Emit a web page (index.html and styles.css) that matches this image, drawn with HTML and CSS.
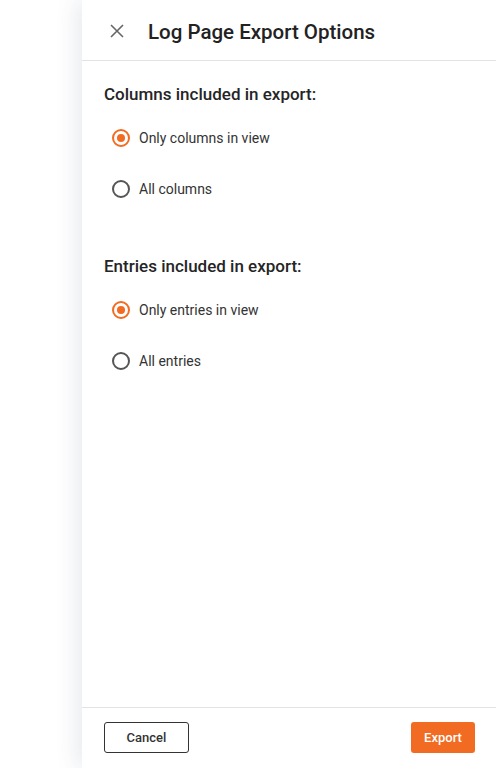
FILE: index.html
```html
<!DOCTYPE html>
<html lang="en">
<head>
    <meta charset="UTF-8">
    <meta name="viewport" content="width=device-width, initial-scale=1.0">
    <title>Log Page Export Options</title>
    <link rel="stylesheet" href="styles.css">
</head>
<body>
    <div class="backdrop"></div>
    <div class="panel">
        <div class="panel-header">
            <button class="close-btn" aria-label="Close">
                <svg width="14" height="14" viewBox="0 0 14 14">
                    <path d="M1 1 L13 13 M13 1 L1 13" stroke="#666" stroke-width="1.6" fill="none"/>
                </svg>
            </button>
            <h1>Log Page Export Options</h1>
        </div>

        <div class="panel-body">
            <div class="section">
                <h2>Columns included in export:</h2>
                <label class="radio-row">
                    <input type="radio" name="columns" checked>
                    <span class="radio"></span>
                    Only columns in view
                </label>
                <label class="radio-row">
                    <input type="radio" name="columns">
                    <span class="radio"></span>
                    All columns
                </label>
            </div>

            <div class="section">
                <h2>Entries included in export:</h2>
                <label class="radio-row">
                    <input type="radio" name="entries" checked>
                    <span class="radio"></span>
                    Only entries in view
                </label>
                <label class="radio-row">
                    <input type="radio" name="entries">
                    <span class="radio"></span>
                    All entries
                </label>
            </div>
        </div>

        <div class="panel-footer">
            <button class="btn btn-cancel">Cancel</button>
            <button class="btn btn-export">Export</button>
        </div>
    </div>
</body>
</html>
```

FILE: styles.css
```css
body {
    margin: 0;
    font-family: Roboto, 'Noto Sans', sans-serif;
    color: #333;
    display: flex;
    height: 768px;
    overflow: hidden;
    background: #fff;
}
.backdrop {
    width: 82px;
    flex-shrink: 0;
}
.panel {
    flex: 1;
    display: flex;
    flex-direction: column;
    background: #fff;
    box-shadow: -6px 0 20px rgba(40, 60, 100, 0.10);
}
.panel-header {
    height: 60px;
    border-bottom: 1px solid #e3e3e3;
    display: flex;
    align-items: center;
    padding-left: 27px;
}
.close-btn {
    background: none;
    border: none;
    padding: 0;
    width: 16px;
    height: 16px;
    display: flex;
    align-items: center;
    justify-content: center;
    cursor: pointer;
    margin-right: 23px;
    margin-top: 1px;
}
h1 {
    margin: 0;
    margin-top: 3px;
    font-size: 20.5px;
    font-weight: 500;
    color: #222;
}
.panel-body {
    flex: 1;
    padding: 21px 21px 0 22px;
}
.section {
    margin-bottom: 40px;
}
h2 {
    margin: 0 0 6px;
    font-size: 17px;
    font-weight: 500;
    line-height: 24px;
    color: #252525;
}
.radio-row {
    display: flex;
    align-items: center;
    height: 51px;
    padding-left: 8px;
    font-size: 14px;
    color: #333;
    cursor: pointer;
}
.radio-row input {
    display: none;
}
.radio {
    width: 14px;
    height: 14px;
    border: 2px solid #555;
    border-radius: 50%;
    margin-right: 9px;
    position: relative;
    flex-shrink: 0;
}
.radio-row input:checked + .radio {
    border-color: #f26b22;
}
.radio-row input:checked + .radio::after {
    content: "";
    position: absolute;
    left: 3px;
    top: 3px;
    width: 8px;
    height: 8px;
    border-radius: 50%;
    background: #f26b22;
}
.panel-footer {
    border-top: 1px solid #e3e3e3;
    display: flex;
    justify-content: space-between;
    align-items: flex-start;
    padding: 14px 21px 0 22px;
    height: 46px;
}
.btn {
    font-family: Roboto, 'Noto Sans', sans-serif;
    font-size: 13px;
    font-weight: 500;
    height: 31px;
    border-radius: 3px;
    cursor: pointer;
}
.btn-cancel {
    width: 85px;
    background: #fff;
    border: 1px solid #333;
    color: #333;
}
.btn-export {
    width: 64px;
    background: #f26b22;
    border: none;
    color: #fff;
}
```
